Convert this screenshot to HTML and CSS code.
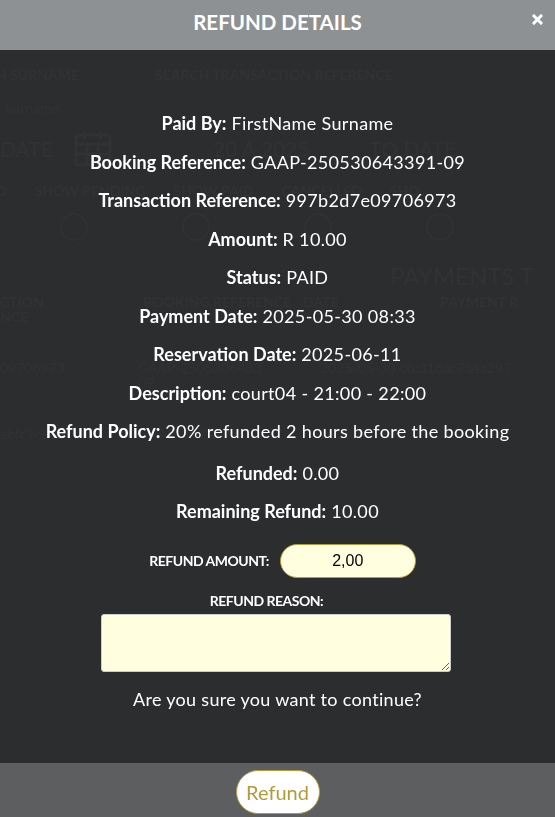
FILE: index.html
```html
<!DOCTYPE html>
<html lang="en">
<head>
  <meta charset="UTF-8">
  <meta name="viewport" content="width=device-width, initial-scale=1.0">
  <title>Payments</title>
  <link rel="stylesheet" href="styles.css">
</head>
<body>

  <!-- page behind the modal, barely visible through the dark overlay -->
  <div class="page">
    <div class="search-row">
      <span class="search-label first">H SURNAME</span>
      <span class="search-label">SEARCH TRANSACTION REFERENCE</span>
    </div>
    <div class="search-value">Surname</div>
    <div class="date-row">
      <span>DATE</span>
      <svg class="cal" width="40" height="40" viewBox="0 0 40 40"><rect x="3" y="7" width="34" height="30" rx="3" fill="none" stroke="currentColor" stroke-width="3"/><path d="M3 16h34M12 3v8M28 3v8M14 16v21M25 16v21M3 26h34" stroke="currentColor" stroke-width="3"/></svg>
      <span class="date-val">20 A 2025</span>
      <span>TO DATE</span>
    </div>
    <div class="filter-row">
      <span>D</span><span>SHOW PENDING</span><span>SHOW PAID</span><span>CANCELLED</span><span>SHO</span>
    </div>
    <div class="radio-row">
      <i></i><i></i><i></i><i></i>
    </div>
    <div class="table-title">PAYMENTS T</div>
    <div class="table-head">
      <span>CTION<br>NCE</span><span>BOOKING REFERENCE</span><span>DATE</span><span>PAYMENT R</span>
    </div>
    <div class="table-row">
      <span>09706973</span><span>GAAP-2505306433<br>09</span><span>2025-05-30 08:31</span><span>8ac7a4a297</span>
    </div>
    <div class="table-row">
      <span>ebfc9c6c6</span><span>GAAP-2505308621-07</span><span>2025-05-30</span><span>8ac7a4a297</span>
    </div>
  </div>

  <div class="modal">
    <div class="modal-header">
      <h2>REFUND DETAILS</h2>
      <button class="close-btn" aria-label="Close">
        <svg width="11" height="11" viewBox="0 0 11 11"><path d="M2 2l7 7M9 2l-7 7" stroke="#fff" stroke-width="3" stroke-linecap="square"/></svg>
      </button>
    </div>

    <div class="modal-body">
      <div class="details">
        <p><strong>Paid By:</strong> FirstName Surname</p>
        <p><strong>Booking Reference:</strong> GAAP-250530643391-09</p>
        <p><strong>Transaction Reference:</strong> 997b2d7e09706973</p>
        <p><strong>Amount:</strong> R 10.00</p>
        <p><strong>Status:</strong> PAID</p>
        <p><strong>Payment Date:</strong> 2025-05-30 08:33</p>
        <p><strong>Reservation Date:</strong> 2025-06-11</p>
        <p><strong>Description:</strong> court04 - 21:00 - 22:00</p>
        <p><strong>Refund Policy:</strong> 20% refunded 2 hours before the booking</p>
        <p class="gap"><strong>Refunded:</strong> 0.00</p>
        <p><strong>Remaining Refund:</strong> 10.00</p>
      </div>

      <div class="amount-row">
        <label for="refund-amount">REFUND AMOUNT:</label>
        <input id="refund-amount" value="2,00">
      </div>

      <label class="reason-label" for="refund-reason">REFUND REASON:</label>
      <textarea id="refund-reason"></textarea>

      <p class="confirm">Are you sure you want to continue?</p>
    </div>

    <div class="modal-footer">
      <button class="refund-btn">Refund</button>
    </div>
  </div>

</body>
</html>
```

FILE: styles.css
```css
body { margin: 0; background: #2c2d2f; font-family: Lato, "Open Sans", sans-serif; height: 817px; overflow: hidden; }

/* faint page under the overlay */
.page { color: #313234; padding-top: 66px; }
.search-row { display: flex; gap: 76px; font-size: 14px; font-weight: 700; margin-left: -4px; }
.search-value { font-size: 14px; margin: 16px 0 0 5px; }
.date-row { display: flex; align-items: center; gap: 20px; font-size: 21px; margin-top: 12px; }
.date-row .cal { color: #313234; }
.date-row .date-val { margin-left: 80px; margin-right: 40px; }
.filter-row { display: flex; gap: 28px; font-size: 14px; font-weight: 700; margin-top: 14px; margin-left: -4px; }
.radio-row { display: flex; gap: 94px; margin: 14px 0 0 60px; }
.radio-row i { width: 24px; height: 24px; border: 2px solid #303133; border-radius: 50%; }
.table-title { font-size: 24px; margin: 20px 0 0 390px; }
.table-head { display: grid; grid-template-columns: 143px 160px 137px 1fr; font-size: 14px; font-weight: 700; line-height: 15px; margin-top: 4px; }
.table-row { display: grid; grid-template-columns: 138px 182px 115px 1fr; font-size: 14px; line-height: 15px; margin-top: 36px; }

/* modal */
.modal { position: fixed; inset: 0; display: flex; flex-direction: column; }
.modal-header { height: 50px; background: #8e9193; display: flex; align-items: center; justify-content: center; position: relative; }
.modal-header h2 { margin: 0; color: #fff; font-size: 20.5px; font-weight: 700; padding-bottom: 7px; }
.close-btn { position: absolute; right: 12px; top: 13px; background: none; border: none; padding: 0; cursor: pointer; }

.modal-body { flex: 1; color: #fff; text-align: center; padding-top: 54px; }
.details p { margin: 0; font-size: 18px; line-height: 38.5px; letter-spacing: 0.35px; }
.details strong { font-weight: 700; letter-spacing: 0; }
.details p.gap { margin-top: 3px; }

.amount-row { display: flex; justify-content: center; align-items: center; gap: 11px; margin-top: 13px; padding-left: 10px; }
.amount-row label, .reason-label { font-size: 14px; font-weight: 700; letter-spacing: -0.5px; }
.amount-row input { width: 130px; height: 32px; border: 1px solid #b59a3a; border-radius: 17px; background: #fffedf; text-align: center; font-family: Arial, "Liberation Sans", sans-serif; font-size: 16px; padding: 0 2px; }
.reason-label { display: block; margin-top: 14px; padding-right: 22px; }
.modal-body textarea { display: block; margin: 5px 0 0 101px; width: 344px; height: 52px; background: #fffedf; border: 1px solid #ccc; border-radius: 3px; padding: 2px; }
.confirm { margin: 16px 0 0 0; font-size: 18px; letter-spacing: 0.3px; }

.modal-footer { height: 54px; background: #5c5e60; display: flex; justify-content: center; padding-top: 7px; box-sizing: border-box; }
.refund-btn { height: 44px; width: 84px; background: #fff; border: 1px solid #b59a3a; border-radius: 22px; color: #b59a3a; font-family: Lato, sans-serif; font-size: 20px; padding: 0; cursor: pointer; }
```
